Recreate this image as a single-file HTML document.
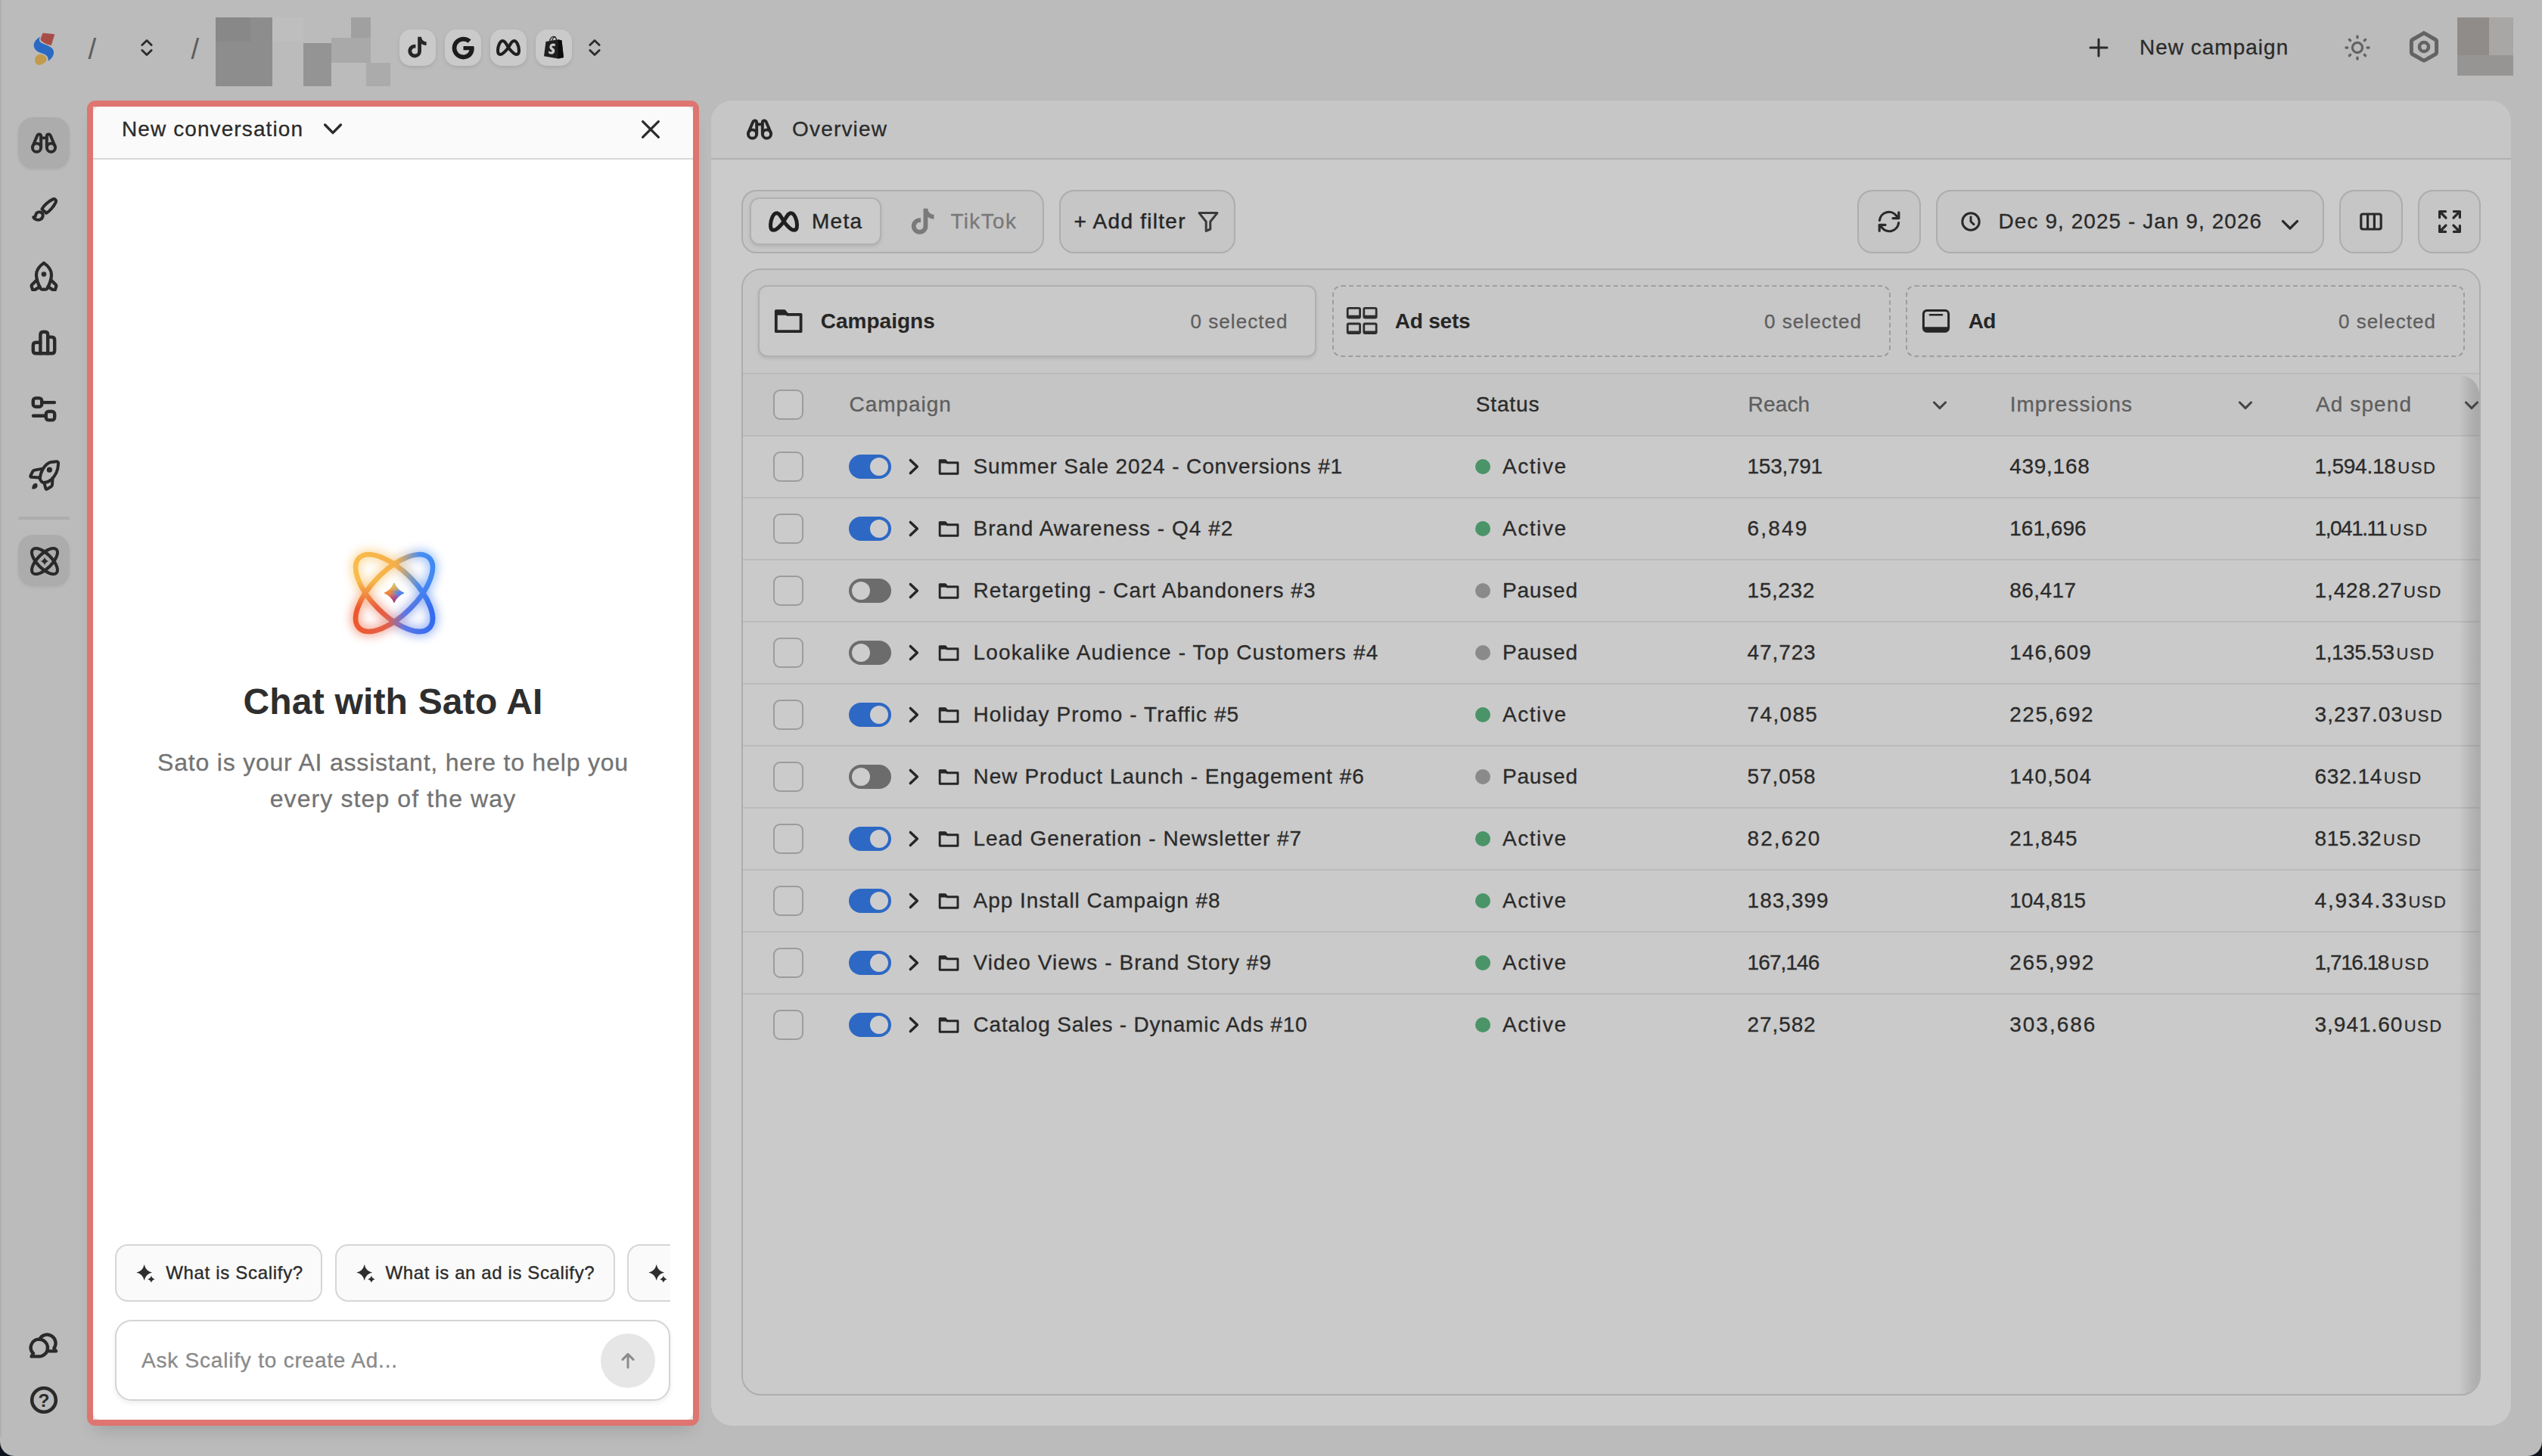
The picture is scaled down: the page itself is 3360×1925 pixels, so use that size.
<!DOCTYPE html>
<html lang="en"><head><meta charset="utf-8"><title>Scalify - Overview</title><style>
*{box-sizing:border-box;margin:0;padding:0}
html,body{width:3360px;height:1925px;overflow:hidden}
body{background:#bbbbbb;font-family:"Liberation Sans",sans-serif;position:relative;color:#2b2b2b}
.a{position:absolute;display:block}
.t{position:absolute;white-space:nowrap;letter-spacing:1px;-webkit-text-stroke:.3px currentColor}
</style></head><body>
<svg class="a" style="left:0px;top:0px;" width="120" height="120" viewBox="0 0 120 120" fill="none">
<path d="M56.9 44 L71.8 45.6 L67.5 59.6 C62 58.5 56 56 54 52.6 C54 50 55.5 47 56.9 44 Z" fill="#a84c48" stroke="#a84c48" stroke-width="0.8" stroke-linejoin="round"/>
<path d="M53.1 48.5 C47 52 43.5 57.5 45 62 C46.5 67.5 52 69.5 57.5 71.2 C62 72.6 64.5 76 63.7 80.7 C68 78 71.5 73.5 71 68.5 C70.5 63.5 66 61.2 60 59 C55.5 57.3 51.5 55.5 52 52 C52.2 50.5 52.6 49.5 53.1 48.5 Z" fill="#2b6ac3"/>
<path d="M46.2 79.5 C46 74.5 50 71.6 53.5 71.8 C58 72 61.8 75 61.6 78.5 C61.4 82 57.5 84.5 53.5 85.8 C49.5 86.6 46.4 84 46.2 79.5 Z" fill="#c39a4c"/>
</svg>
<div class="t" style="left:116.6px;top:42.6px;line-height:44px;font-size:38.4px;color:#5e5e5e;letter-spacing:0;-webkit-text-stroke:0;transform:scaleX(1.0)">/</div>
<div class="t" style="left:252.4px;top:42.6px;line-height:44px;font-size:38.4px;color:#5e5e5e;letter-spacing:0;-webkit-text-stroke:0;transform:scaleX(1.0)">/</div>
<svg class="a" style="left:184px;top:49.3px;" width="20" height="28" viewBox="0 0 20 28" fill="none"><path d="M3.8 10.6 L10 4.6 L16.2 10.6 M3.8 17.4 L10 23.4 L16.2 17.4" stroke="#2b2b2b" stroke-width="2.8" stroke-linecap="round" stroke-linejoin="round"/></svg>
<svg class="a" style="left:775.7px;top:49.3px;" width="20" height="28" viewBox="0 0 20 28" fill="none"><path d="M3.8 10.6 L10 4.6 L16.2 10.6 M3.8 17.4 L10 23.4 L16.2 17.4" stroke="#2b2b2b" stroke-width="2.8" stroke-linecap="round" stroke-linejoin="round"/></svg>
<div class="a" style="left:285px;top:23px;width:75px;height:91px;background:#8d8d8d"></div>
<div class="a" style="left:285px;top:23px;width:46px;height:32px;background:#888888"></div>
<div class="a" style="left:360px;top:23px;width:41px;height:32px;background:#bebebe"></div>
<div class="a" style="left:401px;top:57px;width:37px;height:57px;background:#949494"></div>
<div class="a" style="left:438px;top:50px;width:52px;height:33px;background:#a9a9a9"></div>
<div class="a" style="left:464px;top:23px;width:26px;height:27px;background:#a0a0a0"></div>
<div class="a" style="left:484px;top:83px;width:32px;height:31px;background:#ababab"></div>
<div class="a" style="left:528px;top:39px;width:48px;height:48px;border-radius:15px;background:#cacaca;box-shadow:0 2px 5px rgba(0,0,0,.10)"></div>
<div class="a" style="left:588px;top:39px;width:48px;height:48px;border-radius:15px;background:#cacaca;box-shadow:0 2px 5px rgba(0,0,0,.10)"></div>
<div class="a" style="left:648px;top:39px;width:48px;height:48px;border-radius:15px;background:#cacaca;box-shadow:0 2px 5px rgba(0,0,0,.10)"></div>
<div class="a" style="left:708px;top:39px;width:48px;height:48px;border-radius:15px;background:#cacaca;box-shadow:0 2px 5px rgba(0,0,0,.10)"></div>
<svg class="a" style="left:533px;top:43.7px;" width="37" height="37" viewBox="0 0 24 24" fill="none"><path d="M16.6 5.82s.51.5 0 0A4.278 4.278 0 0 1 15.54 3h-3.09v12.4a2.592 2.592 0 0 1-2.59 2.5c-1.42 0-2.6-1.16-2.6-2.6 0-1.72 1.66-3.01 3.37-2.48V9.66c-3.45-.46-6.47 2.22-6.47 5.64 0 3.33 2.76 5.7 5.69 5.7 3.14 0 5.69-2.55 5.69-5.7V9.01a7.35 7.35 0 0 0 4.3 1.38V7.3s-1.88.09-3.24-1.48z" fill="#262626"/></svg>
<svg class="a" style="left:594.5px;top:45.7px;" width="35" height="35" viewBox="0 0 24 24" fill="none"><path d="M21.35 10.2 H12 V13.9 H17.4 C16.7 16.6 14.6 18.2 12 18.2 C8.6 18.2 5.8 15.4 5.8 12 C5.8 8.6 8.6 5.8 12 5.8 C13.6 5.8 15 6.4 16.1 7.3 L18.9 4.5 C17.1 2.8 14.7 1.8 12 1.8 C6.4 1.8 1.8 6.4 1.8 12 C1.8 17.6 6.4 22.2 12 22.2 C17.6 22.2 21.8 18.3 21.8 12 C21.8 11.4 21.5 10.8 21.35 10.2 Z" fill="#1c1c1c"/></svg>
<svg class="a" style="left:652px;top:43px;" width="40" height="40" viewBox="-20 -20 40 40" fill="none"><path d="M0 0 C-2.5 -4.5 -4.5 -9 -7.5 -9 C-11.5 -9 -14 -1 -14 3.5 C-14 7 -12.8 9 -10.8 9 C-7.5 9 -4 5 0 0 C2.5 -4.5 4.5 -9 7.5 -9 C11.5 -9 14 -1 14 3.5 C14 7 12.8 9 10.8 9 C7.5 9 4 5 0 0 Z" stroke="#1f1f1f" stroke-width="4.1" stroke-linejoin="round"/></svg>
<svg class="a" style="left:717px;top:46px;" width="30" height="34" viewBox="0 0 30 34" fill="none">
<path d="M4.5 9 L20.5 6.2 L25.5 7.4 L28 30 L20.8 31.6 L2 28.2 Z" fill="#1f1f1f"/>
<path d="M20.8 6.3 L25.5 7.4 L28 30 L20.8 31.6 Z" fill="#0c0c0c"/>
<path d="M9.5 8.5 C10 4.5 13 1.5 15.5 2.5 C17.5 3.3 18.5 6 18.5 7.5 M12.5 8 C13.5 4 16 2 17.5 3" stroke="#1f1f1f" stroke-width="1.3" fill="none"/>
<path d="M17.2 12.4 L16.2 15.4 C15.2 14.9 14.2 14.8 13.6 14.9 C12.2 15.1 12.2 16.2 13 16.8 C14.4 17.9 16.6 18.8 16.3 21.8 C16 24.6 13.6 26.2 10.8 25.6 C9.4 25.3 8.4 24.6 7.8 23.8 L8.6 21.2 C9.4 21.9 10.6 22.7 11.6 22.6 C12.6 22.5 12.9 21.6 12.3 20.8 C11.1 19.4 9 18.5 9.4 15.6 C9.8 12.6 12.6 11.2 15.4 11.7 C16.2 11.85 16.8 12.1 17.2 12.4 Z" fill="#cacaca"/>
</svg>
<svg class="a" style="left:2760px;top:48.5px;" width="28" height="28" viewBox="0 0 28 28" fill="none"><path d="M14 3 V25 M3 14 H25" stroke="#2b2b2b" stroke-width="3" stroke-linecap="round"/></svg>
<div class="t" style="left:2828px;top:43.32px;line-height:40px;font-size:28px;color:#2b2b2b;font-weight:400;letter-spacing:1.0px;">New campaign</div>
<svg class="a" style="left:3096px;top:43px;" width="40" height="40" viewBox="0 0 40 40" fill="none"><circle cx="20" cy="20" r="6.6" stroke="#636363" stroke-width="3.2"/><path d="M33.20 20.00 L35.00 20.00" stroke="#636363" stroke-width="3.4" stroke-linecap="round"/><path d="M29.33 29.33 L30.61 30.61" stroke="#636363" stroke-width="3.4" stroke-linecap="round"/><path d="M20.00 33.20 L20.00 35.00" stroke="#636363" stroke-width="3.4" stroke-linecap="round"/><path d="M10.67 29.33 L9.39 30.61" stroke="#636363" stroke-width="3.4" stroke-linecap="round"/><path d="M6.80 20.00 L5.00 20.00" stroke="#636363" stroke-width="3.4" stroke-linecap="round"/><path d="M10.67 10.67 L9.39 9.39" stroke="#636363" stroke-width="3.4" stroke-linecap="round"/><path d="M20.00 6.80 L20.00 5.00" stroke="#636363" stroke-width="3.4" stroke-linecap="round"/><path d="M29.33 10.67 L30.61 9.39" stroke="#636363" stroke-width="3.4" stroke-linecap="round"/></svg>
<svg class="a" style="left:3180px;top:38px;" width="48" height="48" viewBox="0 0 48 48" fill="none"><path d="M24 5.6 L39.4 14.5 Q40.6 15.2 40.6 16.6 V31.4 Q40.6 32.8 39.4 33.5 L25.2 41.7 Q24 42.4 22.8 41.7 L8.6 33.5 Q7.4 32.8 7.4 31.4 V16.6 Q7.4 15.2 8.6 14.5 L22.8 6.3 Q24 5.6 25.2 6.3" stroke="#636363" stroke-width="5" stroke-linejoin="round" stroke-linecap="round"/><circle cx="24" cy="24" r="6" stroke="#636363" stroke-width="4.6"/></svg>
<div class="a" style="left:3248px;top:23px;width:74px;height:77px;background:#979593"></div>
<div class="a" style="left:3248px;top:23px;width:42px;height:50px;background:#908c89"></div>
<div class="a" style="left:3290px;top:23px;width:32px;height:50px;background:#a9a7a5"></div>
<div class="a" style="left:24px;top:155px;width:68px;height:68px;border-radius:20px;background:#acacac;box-shadow:0 2px 4px rgba(0,0,0,.06)"></div>
<div class="a" style="left:24px;top:707px;width:68px;height:68px;border-radius:20px;background:#acacac;box-shadow:0 2px 4px rgba(0,0,0,.06)"></div>
<svg class="a" style="left:38px;top:169px;" width="40.0" height="40.0" viewBox="0 0 40 40" fill="none"><g stroke="#2a2a2a" stroke-width="3.9" stroke-linecap="round" stroke-linejoin="round">
<circle cx="10.5" cy="26.2" r="5.6"/><circle cx="29.5" cy="26.2" r="5.6"/>
<path d="M5.2 24.6 L10.9 11 Q12.2 8 14.6 8.6 Q16.2 9.1 16.2 11 V26.3"/>
<path d="M34.8 24.6 L29.1 11 Q27.8 8 25.4 8.6 Q23.8 9.1 23.8 11 V26.3"/>
<path d="M16.2 13.4 H23.8"/></g></svg>
<svg class="a" style="left:38px;top:257px;" width="40" height="40" viewBox="0 0 40 40" fill="none"><g stroke="#2a2a2a" stroke-width="4" stroke-linecap="round" stroke-linejoin="round">
<path d="M17.4 19.4 C20 14.6 26.6 9 31.4 6.6 C34.6 5.2 37 7.4 35.6 10.6 C33.4 15.4 28 22 23.2 24.8 Z"/>
<path d="M13 23.4 C16.5 22.8 19.3 25.6 18.6 29 C17.9 32.6 14 34.6 10.2 33.4 C8.2 32.8 6.8 31.6 6.2 30 C8.4 30 9 28.6 9.2 27.2 C9.5 25.2 11 23.8 13 23.4 Z"/>
</g></svg>
<svg class="a" style="left:38px;top:345px;" width="40" height="40" viewBox="0 0 40 40" fill="none"><g stroke="#2a2a2a" stroke-width="4.2" stroke-linecap="round" stroke-linejoin="round">
<path d="M20 2.6 C26.5 7.2 30 12.4 30 18.4 C30 24.4 27.4 30.6 24.6 36.4 Q23.8 37.6 22.4 37.6 H17.6 Q16.2 37.6 15.4 36.4 C12.6 30.6 10 24.4 10 18.4 C10 12.4 13.5 7.2 20 2.6 Z"/>
<path d="M10.6 25.2 L4.2 31.6 Q3.4 32.6 3.8 33.8 L5.2 38.2 Q5.8 39.6 7.2 38.8 L14.6 34"/>
<path d="M29.4 25.2 L35.8 31.6 Q36.6 32.6 36.2 33.8 L34.8 38.2 Q34.2 39.6 32.8 38.8 L25.4 34"/>
</g><circle cx="20" cy="17.6" r="3.3" fill="#2a2a2a"/></svg>
<svg class="a" style="left:38px;top:433px;" width="40" height="40" viewBox="0 0 40 40" fill="none"><g stroke="#2a2a2a" stroke-width="4.4" stroke-linecap="round" stroke-linejoin="round">
<path d="M15.4 19.8 H9.6 Q5.8 19.8 5.8 23.6 V30.4 Q5.8 34.2 9.6 34.2 H30.4 Q34.2 34.2 34.2 30.4 V16.4 Q34.2 12.6 30.4 12.6 H25.2"/>
<path d="M15.4 34.2 V9.6 Q15.4 5.8 19.2 5.8 H21.4 Q25.2 5.8 25.2 9.6 V34.2"/>
</g></svg>
<svg class="a" style="left:38px;top:521px;" width="40" height="40" viewBox="0 0 40 40" fill="none"><g stroke="#2a2a2a" stroke-width="4.4" stroke-linecap="round" stroke-linejoin="round">
<rect x="5.8" y="5.4" width="11.4" height="11.4" rx="3.4"/><path d="M18 11.1 H34"/>
<rect x="22.8" y="23" width="11.4" height="11.4" rx="3.4"/><path d="M6 28.7 H22"/>
</g></svg>
<svg class="a" style="left:36px;top:607px;" width="44" height="44" viewBox="0 0 44 44" fill="none"><g stroke="#2a2a2a" stroke-width="4" stroke-linecap="round" stroke-linejoin="round">
<path d="M16.8 26.2 C17.4 16.5 23 6.4 31.5 3.9 L38.4 3.2 Q41.4 3 41.1 6 C40.8 14.5 37.5 22 31.5 27.4 C28.4 30 25 31.2 21.6 31 Q18.4 30.8 16.8 26.2 Z"/>
<path d="M20.4 12.6 L9.4 14.6 Q8 15 7.4 16.2 L4.4 22 Q3.8 23.6 5.4 23.8 L16.4 24.6"/>
<path d="M33.6 25 L33 34 Q33 35.4 31.8 36.2 L26.2 39.6 Q24.8 40.4 24.4 38.8 L22.4 31.4"/>
</g><circle cx="29.4" cy="14.2" r="3.6" fill="#2a2a2a"/>
<path d="M11.6 32 C8.4 31.8 6.2 34.4 6.2 39.6 C10.6 39.8 13.8 38 13.6 34.4 C13.5 33 12.8 32.2 11.6 32 Z" fill="#2a2a2a"/></svg>
<div class="a" style="left:24px;top:683px;width:68px;height:4px;background:#adadad;border-radius:1px"></div>
<svg class="a" style="left:36px;top:719px;" width="46" height="46" viewBox="0 0 46 46" fill="none"><g stroke="#2a2a2a" stroke-width="4" fill="none">
<ellipse cx="23" cy="23" rx="22" ry="9.6" transform="rotate(45 23 23)"/>
<ellipse cx="23" cy="23" rx="22" ry="9.6" transform="rotate(-45 23 23)"/></g>
<path d="M23 17.8 Q24.2 21.8 28.2 23 Q24.2 24.2 23 28.2 Q21.8 24.2 17.8 23 Q21.8 21.8 23 17.8 Z" fill="#2a2a2a"/></svg>
<svg class="a" style="left:36px;top:1757px;" width="44" height="44" viewBox="0 0 44 44" fill="none"><g stroke="#2a2a2a" stroke-width="4.4" stroke-linecap="round" stroke-linejoin="round">
<path d="M17.2 12.2 A11 11 0 1 1 35.4 25.4 L38 29.4 H28.6"/>
<path d="M15.6 13.6 A11 11 0 0 1 15.6 36.4 H5.6 L8 32.4 A11 11 0 0 1 15.6 13.6 Z"/>
</g></svg>
<svg class="a" style="left:36px;top:1829px;" width="44" height="44" viewBox="0 0 44 44" fill="none"><circle cx="22" cy="22" r="15.8" stroke="#2a2a2a" stroke-width="4.6"/>
<text x="22.1" y="30.6" text-anchor="middle" font-family="Liberation Sans, sans-serif" font-weight="700" font-size="24.5" fill="#2a2a2a">?</text></svg>
<div class="a" style="left:0;top:1906px;width:19px;height:19px;background:radial-gradient(circle at 100% 0%, rgba(13,20,32,0) 0 18.4px, #0d1420 19.4px)"></div>
<div class="a" style="left:3341px;top:1906px;width:19px;height:19px;background:radial-gradient(circle at 0% 0%, rgba(13,20,32,0) 0 18.4px, #0d1420 19.4px)"></div>
<div class="a" style="left:0;top:0;width:2px;height:1900px;background:#b0b0b0"></div>
<div class="a" style="left:115px;top:133px;width:809px;height:1752px;border-radius:11px;background:#df7570;box-shadow:0 14px 22px -10px rgba(0,0,0,.16)"></div>
<div class="a" style="left:123px;top:141px;width:793px;height:1736px;background:#e4e4e4"></div>
<div class="a" style="left:123px;top:141px;width:793px;height:1736px;background:#ffffff;border-radius:9px;overflow:hidden"><div style="height:70px;background:#fafafa;border-bottom:2px solid #d9d9d9"></div></div>
<div class="t" style="left:161px;top:151.32px;line-height:40px;font-size:28px;color:#2b2b2b;font-weight:400;letter-spacing:1.096px;">New conversation</div>
<svg class="a" style="left:424px;top:156px;" width="32" height="28" viewBox="0 0 32 28" fill="none"><path d="M5.6 9 L16 19.6 L26.4 9" stroke="#2b2b2b" stroke-width="3.4" stroke-linecap="round" stroke-linejoin="round"/></svg>
<svg class="a" style="left:844px;top:155px;" width="32" height="32" viewBox="0 0 32 32" fill="none"><path d="M5.6 5.6 L26.4 26.4 M26.4 5.6 L5.6 26.4" stroke="#2b2b2b" stroke-width="3.2" stroke-linecap="round"/></svg>
<svg class="a" style="left:430.5px;top:694px;" width="180" height="180" viewBox="0 0 180 180" fill="none"><defs>
<linearGradient id="gA" gradientUnits="userSpaceOnUse" x1="30" y1="0" x2="150" y2="0"><stop offset="0" stop-color="#f9bd4c"/><stop offset=".52" stop-color="#f5b048"/><stop offset=".78" stop-color="#4a8ef2"/><stop offset="1" stop-color="#3b86f5"/></linearGradient>
<linearGradient id="gB" gradientUnits="userSpaceOnUse" x1="30" y1="0" x2="150" y2="0"><stop offset="0" stop-color="#f0562a"/><stop offset=".42" stop-color="#e4604a"/><stop offset=".62" stop-color="#5a78e8"/><stop offset="1" stop-color="#2a68f0"/></linearGradient>
<linearGradient id="gM" gradientUnits="userSpaceOnUse" x1="0" y1="40" x2="0" y2="140"><stop offset="0" stop-color="#000"/><stop offset=".35" stop-color="#000"/><stop offset=".7" stop-color="#fff"/><stop offset="1" stop-color="#fff"/></linearGradient>
<mask id="mk" maskUnits="userSpaceOnUse" x="0" y="0" width="180" height="180"><rect width="180" height="180" fill="url(#gM)"/></mask>
<linearGradient id="g3" x1="0" y1="0" x2="1" y2="0"><stop offset="0" stop-color="#f4822c"/><stop offset=".3" stop-color="#ee8c3a"/><stop offset=".7" stop-color="#4a8af0"/><stop offset="1" stop-color="#3a86f2"/></linearGradient><linearGradient id="g4" x1="0" y1="0" x2="0" y2="1"><stop offset="0" stop-color="#f8d040"/><stop offset=".32" stop-color="#f4c040" stop-opacity=".55"/><stop offset=".5" stop-color="#c86090" stop-opacity="0"/><stop offset=".68" stop-color="#c03088" stop-opacity=".55"/><stop offset="1" stop-color="#c02878"/></linearGradient>
<filter id="bl" x="-30%" y="-30%" width="160%" height="160%"><feGaussianBlur stdDeviation="6.5"/></filter>
<g id="orb" fill="none"><path d="M136.32 136.32 A65.5 29.6 45 1 0 43.68 43.68 A65.5 29.6 45 1 0 136.32 136.32 Z"/><path d="M43.68 136.32 A65.5 29.6 135 1 0 136.32 43.68 A65.5 29.6 135 1 0 43.68 136.32 Z"/></g>
</defs>
<g filter="url(#bl)" opacity=".6"><use href="#orb" stroke="url(#gA)" stroke-width="11"/><use href="#orb" stroke="url(#gB)" stroke-width="11" mask="url(#mk)"/></g>
<use href="#orb" stroke="url(#gA)" stroke-width="6.6"/><use href="#orb" stroke="url(#gB)" stroke-width="6.6" mask="url(#mk)"/>
<path d="M90 77 Q93.9 86.1 103 90 Q93.9 93.9 90 103 Q86.1 93.9 77 90 Q86.1 86.1 90 77 Z" fill="url(#g3)" stroke="url(#g3)" stroke-width="0.8" stroke-linejoin="round"/><path d="M90 77 Q93.9 86.1 103 90 Q93.9 93.9 90 103 Q86.1 93.9 77 90 Q86.1 86.1 90 77 Z" fill="url(#g4)"/></svg>
<div class="t" style="left:123px;width:793px;text-align:center;top:896px;line-height:64px;font-size:48px;font-weight:700;color:#2e2e2e;-webkit-text-stroke:0;letter-spacing:0.194px">Chat with Sato AI</div>
<div class="t" style="left:123px;width:793px;text-align:center;top:983.5px;line-height:48px;font-size:32px;color:#737373;white-space:normal;padding:0 60px"><span style="letter-spacing:0.791px;white-space:nowrap">Sato is your AI assistant, here to help you</span><br><span style="letter-spacing:1.106px;white-space:nowrap">every step of the way</span></div>
<div class="a" style="left:152px;top:1645px;width:734px;height:76px;overflow:hidden">
<div class="a" style="left:0px;top:0;width:274px;height:76px;border:2px solid #d6d6d6;border-radius:17px;background:#fafafa"></div>
<svg class="a" style="left:27px;top:25px" width="27" height="27" viewBox="0 0 24 24"><path d="M10.4 1.6 Q12 9.4 19.6 11 Q12 12.6 10.4 20.4 Q8.8 12.6 1.2 11 Q8.8 9.4 10.4 1.6 Z" fill="#2e2e2e"/><path d="M18.6 14.6 Q19.4 18 22.8 18.8 Q19.4 19.6 18.6 23 Q17.8 19.6 14.4 18.8 Q17.8 18 18.6 14.6 Z" fill="#2e2e2e"/></svg>
<div class="t" style="left:67.2px;top:18.3px;line-height:40px;font-size:24px;color:#2b2b2b;letter-spacing:0.685px;-webkit-text-stroke:.35px #2b2b2b">What is Scalify?</div>
<div class="a" style="left:291px;top:0;width:370px;height:76px;border:2px solid #d6d6d6;border-radius:17px;background:#fafafa"></div>
<svg class="a" style="left:318px;top:25px" width="27" height="27" viewBox="0 0 24 24"><path d="M10.4 1.6 Q12 9.4 19.6 11 Q12 12.6 10.4 20.4 Q8.8 12.6 1.2 11 Q8.8 9.4 10.4 1.6 Z" fill="#2e2e2e"/><path d="M18.6 14.6 Q19.4 18 22.8 18.8 Q19.4 19.6 18.6 23 Q17.8 19.6 14.4 18.8 Q17.8 18 18.6 14.6 Z" fill="#2e2e2e"/></svg>
<div class="t" style="left:357.6px;top:18.3px;line-height:40px;font-size:24px;color:#2b2b2b;letter-spacing:0.606px;-webkit-text-stroke:.35px #2b2b2b">What is an ad is Scalify?</div>
<div class="a" style="left:677px;top:0;width:300px;height:76px;border:2px solid #d6d6d6;border-radius:17px;background:#fafafa"></div>
<svg class="a" style="left:704px;top:25px" width="27" height="27" viewBox="0 0 24 24"><path d="M10.4 1.6 Q12 9.4 19.6 11 Q12 12.6 10.4 20.4 Q8.8 12.6 1.2 11 Q8.8 9.4 10.4 1.6 Z" fill="#2e2e2e"/><path d="M18.6 14.6 Q19.4 18 22.8 18.8 Q19.4 19.6 18.6 23 Q17.8 19.6 14.4 18.8 Q17.8 18 18.6 14.6 Z" fill="#2e2e2e"/></svg>
</div>
<div class="a" style="left:152px;top:1745px;width:734px;height:107px;border:2px solid #d4d4d4;border-radius:22px;background:#fff;box-shadow:0 3px 6px rgba(0,0,0,.07)"></div>
<div class="t" style="left:187px;top:1779.32px;line-height:40px;font-size:28px;color:#8a8a8a;font-weight:400;letter-spacing:0.789px;">Ask Scalify to create Ad...</div>
<div class="a" style="left:794px;top:1763px;width:72px;height:72px;border-radius:50%;background:#e6e6e6"></div>
<svg class="a" style="left:816px;top:1785px;" width="28" height="28" viewBox="0 0 28 28" fill="none"><path d="M14 23 V6 M7 12.4 L14 5.4 L21 12.4" stroke="#8c8c8c" stroke-width="3" stroke-linecap="round" stroke-linejoin="round"/></svg>
<div class="a" style="left:940px;top:133px;width:2379px;height:1752px;border-radius:28px;background:#cbcbcb;overflow:hidden"><div style="height:78px;background:#c6c6c6;border-bottom:2px solid #b1b1b1"></div></div>
<svg class="a" style="left:984px;top:151px;" width="40.0" height="40.0" viewBox="0 0 40 40" fill="none"><g stroke="#262626" stroke-width="3.9" stroke-linecap="round" stroke-linejoin="round">
<circle cx="10.5" cy="26.2" r="5.6"/><circle cx="29.5" cy="26.2" r="5.6"/>
<path d="M5.2 24.6 L10.9 11 Q12.2 8 14.6 8.6 Q16.2 9.1 16.2 11 V26.3"/>
<path d="M34.8 24.6 L29.1 11 Q27.8 8 25.4 8.6 Q23.8 9.1 23.8 11 V26.3"/>
<path d="M16.2 13.4 H23.8"/></g></svg>
<div class="t" style="left:1047px;top:151.32px;line-height:40px;font-size:28px;color:#2b2b2b;font-weight:400;letter-spacing:1.185px;">Overview</div>
<div class="a" style="left:980px;top:251px;width:400px;height:84px;border:2px solid #adadad;border-radius:20px;background:#c6c6c6;"></div>
<div class="a" style="left:991px;top:261px;width:174px;height:63px;border:2px solid #b1b1b1;border-radius:13px;background:#cbcbcb;box-shadow:0 2px 4px rgba(0,0,0,.10)"></div>
<svg class="a" style="left:1011px;top:268px;" width="50" height="50" viewBox="-20 -20 40 40" fill="none"><path d="M0 0 C-2.5 -4.5 -4.5 -9 -7.5 -9 C-11.5 -9 -14 -1 -14 3.5 C-14 7 -12.8 9 -10.8 9 C-7.5 9 -4 5 0 0 C2.5 -4.5 4.5 -9 7.5 -9 C11.5 -9 14 -1 14 3.5 C14 7 12.8 9 10.8 9 C7.5 9 4 5 0 0 Z" stroke="#1f1f1f" stroke-width="4" stroke-linejoin="round"/></svg>
<div class="t" style="left:1073px;top:273.32px;line-height:40px;font-size:28px;color:#262626;font-weight:400;letter-spacing:1.250px;-webkit-text-stroke:0.4px #262626;">Meta</div>
<svg class="a" style="left:1197.3px;top:269.5px;" width="45.4" height="45.4" viewBox="0 0 24 24" fill="none"><path d="M16.6 5.82s.51.5 0 0A4.278 4.278 0 0 1 15.54 3h-3.09v12.4a2.592 2.592 0 0 1-2.59 2.5c-1.42 0-2.6-1.16-2.6-2.6 0-1.72 1.66-3.01 3.37-2.48V9.66c-3.45-.46-6.47 2.22-6.47 5.64 0 3.33 2.76 5.7 5.69 5.7 3.14 0 5.69-2.55 5.69-5.7V9.01a7.35 7.35 0 0 0 4.3 1.38V7.3s-1.88.09-3.24-1.48z" fill="#7a7a7a"/></svg>
<div class="t" style="left:1256.4px;top:273.32px;line-height:40px;font-size:28px;color:#787878;font-weight:400;letter-spacing:1.348px;-webkit-text-stroke:0.3px #787878;">TikTok</div>
<div class="a" style="left:1400px;top:251px;width:233px;height:84px;border:2px solid #adadad;border-radius:20px;background:#c6c6c6;"></div>
<div class="t" style="left:1419.5px;top:273.32px;line-height:40px;font-size:28px;color:#262626;font-weight:400;letter-spacing:1.264px;-webkit-text-stroke:0.45px #262626;">+ Add filter</div>
<svg class="a" style="left:1580px;top:276px;" width="34" height="34" viewBox="0 0 34 34" fill="none"><path d="M5 5.6 H29 L19.8 17 V27 L14.2 29.4 V17 Z" stroke="#3a3a3a" stroke-width="3" stroke-linejoin="round" stroke-linecap="round"/></svg>
<div class="a" style="left:2455px;top:251px;width:84px;height:84px;border:2px solid #adadad;border-radius:20px;background:#c6c6c6;"></div>
<svg class="a" style="left:2479px;top:275px;" width="36" height="36" viewBox="0 0 36 36" fill="none"><g stroke="#2a2a2a" stroke-width="3.2" stroke-linecap="round" stroke-linejoin="round">
<path d="M5.4 16.4 A12.4 12.4 0 0 1 27.6 10.2 L30.6 13.4"/><path d="M30.8 5.8 V13.6 H23"/>
<path d="M30.6 19.6 A12.4 12.4 0 0 1 8.4 25.8 L5.4 22.6"/><path d="M5.2 30.2 V22.4 H13"/></g></svg>
<div class="a" style="left:2559px;top:251px;width:513px;height:84px;border:2px solid #adadad;border-radius:20px;background:#c6c6c6;"></div>
<svg class="a" style="left:2588.6px;top:276.8px;" width="32" height="32" viewBox="0 0 32 32" fill="none"><circle cx="16" cy="16" r="11.2" stroke="#2a2a2a" stroke-width="3"/><path d="M16 9.8 V16 L20 19.6" stroke="#2a2a2a" stroke-width="3" stroke-linecap="round" stroke-linejoin="round"/></svg>
<div class="t" style="left:2641.6px;top:273.32px;line-height:40px;font-size:28px;color:#2b2b2b;font-weight:400;letter-spacing:1.053px;">Dec 9, 2025 - Jan 9, 2026</div>
<svg class="a" style="left:3011px;top:285px;" width="32" height="24" viewBox="0 0 32 24" fill="none"><path d="M6.4 7.4 L16 17 L25.6 7.4" stroke="#2a2a2a" stroke-width="3.2" stroke-linecap="round" stroke-linejoin="round"/></svg>
<div class="a" style="left:3092px;top:251px;width:84px;height:84px;border:2px solid #adadad;border-radius:20px;background:#c6c6c6;"></div>
<svg class="a" style="left:3116px;top:276.6px;" width="36" height="32" viewBox="0 0 36 32" fill="none"><rect x="4.8" y="6" width="26.4" height="20" rx="2.4" stroke="#2a2a2a" stroke-width="3.2"/><path d="M13.6 6 V26 M22.4 6 V26" stroke="#2a2a2a" stroke-width="3.2"/></svg>
<div class="a" style="left:3196px;top:251px;width:83px;height:84px;border:2px solid #adadad;border-radius:20px;background:#c6c6c6;"></div>
<svg class="a" style="left:3220px;top:275px;" width="36" height="36" viewBox="0 0 36 36" fill="none"><g stroke="#2a2a2a" stroke-width="3.2" stroke-linecap="round" stroke-linejoin="round">
<path d="M4.6 12.6 V4.6 H12.6 M4.6 4.6 L13 13"/><path d="M23.4 4.6 H31.4 V12.6 M31.4 4.6 L23 13"/>
<path d="M4.6 23.4 V31.4 H12.6 M4.6 31.4 L13 23"/><path d="M23.4 31.4 H31.4 V23.4 M31.4 31.4 L23 23"/></g></svg>
<div class="a" style="left:980px;top:355px;width:2299px;height:1490px;border:2px solid #adadad;border-radius:26px;background:#c8c8c8;overflow:hidden">
<div class="a" style="left:0;top:0;width:2295px;height:138px;background:#c7c7c7;border-bottom:2px solid #bababa"></div>
<div class="a" style="left:0;top:138px;width:2295px;height:82px;background:#c5c5c5;border-bottom:2px solid #b9b9b9"></div>
<div class="a" style="left:0;top:220px;width:2295px;height:82px;background:#cacaca;border-bottom:2px solid #bbbbbb;"></div>
<div class="a" style="left:0;top:302px;width:2295px;height:82px;background:#cacaca;border-bottom:2px solid #bbbbbb;"></div>
<div class="a" style="left:0;top:384px;width:2295px;height:82px;background:#cacaca;border-bottom:2px solid #bbbbbb;"></div>
<div class="a" style="left:0;top:466px;width:2295px;height:82px;background:#cacaca;border-bottom:2px solid #bbbbbb;"></div>
<div class="a" style="left:0;top:548px;width:2295px;height:82px;background:#cacaca;border-bottom:2px solid #bbbbbb;"></div>
<div class="a" style="left:0;top:630px;width:2295px;height:82px;background:#cacaca;border-bottom:2px solid #bbbbbb;"></div>
<div class="a" style="left:0;top:712px;width:2295px;height:82px;background:#cacaca;border-bottom:2px solid #bbbbbb;"></div>
<div class="a" style="left:0;top:794px;width:2295px;height:82px;background:#cacaca;border-bottom:2px solid #bbbbbb;"></div>
<div class="a" style="left:0;top:876px;width:2295px;height:82px;background:#cacaca;border-bottom:2px solid #bbbbbb;"></div>
<div class="a" style="left:0;top:958px;width:2295px;height:82px;background:#cacaca;"></div>
<div class="a" style="left:0;top:1040px;width:2295px;height:460px;background:#cacaca"></div>
<div class="a" style="left:2268px;top:139px;width:27px;height:1360px;border-top-right-radius:26px;background:linear-gradient(90deg,rgba(0,0,0,0),rgba(0,0,0,.10) 60%,rgba(0,0,0,.15))"></div>
</div>
<div class="a" style="left:1002px;top:377px;width:738px;height:95px;border:2px solid #b0b0b0;border-radius:12px;background:#c9c9c9;box-shadow:0 2px 4px rgba(0,0,0,.10)"></div>
<svg class="a" style="left:1020px;top:404px;" width="44" height="40" viewBox="0 0 44 40" fill="none"><path d="M5.8 34.2 V7.2 H16.8 L20.6 11.8 H38.6 V34.2 Z" stroke="#262626" stroke-width="3.8" stroke-linejoin="round"/><path d="M5.8 7.2 H16.8 L20.6 11.8 H5.8 Z" fill="#262626" stroke="#262626" stroke-width="2" stroke-linejoin="round"/></svg>
<div class="t" style="left:1084.8px;top:405.32px;line-height:40px;font-size:28px;color:#262626;font-weight:700;letter-spacing:0.008px;-webkit-text-stroke:0;">Campaigns</div>
<div class="t" style="left:1573.5px;top:405.30px;line-height:40px;font-size:26px;color:#5e5e5e;font-weight:400;letter-spacing:1.052px;">0 selected</div>
<div class="a" style="left:1761px;top:377px;width:738px;height:95px;border:2px dashed #9e9e9e;border-radius:12px"></div>
<svg class="a" style="left:1777px;top:402px;" width="48" height="46" viewBox="0 0 48 46" fill="none"><g stroke="#2e2e2e" stroke-width="2.8"><rect x="4.2" y="5.4" width="16.4" height="12.6" rx="1.6"/><rect x="25.8" y="5.4" width="16.4" height="12.6" rx="1.6"/>
<rect x="4.2" y="26" width="16.4" height="12.6" rx="1.6"/><rect x="25.8" y="26" width="16.4" height="12.6" rx="1.6"/></g>
<path d="M4.2 16.6 H20.6 M25.8 16.6 H42.2 M4.2 37.2 H20.6 M25.8 37.2 H42.2" stroke="#2e2e2e" stroke-width="3.6"/></svg>
<div class="t" style="left:1843.7px;top:405.32px;line-height:40px;font-size:28px;color:#262626;font-weight:700;letter-spacing:-0.193px;-webkit-text-stroke:0;">Ad sets</div>
<div class="t" style="left:2332px;top:405.30px;line-height:40px;font-size:26px;color:#5e5e5e;font-weight:400;letter-spacing:1.052px;">0 selected</div>
<div class="a" style="left:2519px;top:377px;width:739px;height:95px;border:2px dashed #9e9e9e;border-radius:12px"></div>
<svg class="a" style="left:2537px;top:405px;" width="44" height="40" viewBox="0 0 44 40" fill="none"><rect x="5.4" y="5.6" width="33.2" height="27.6" rx="4.4" stroke="#262626" stroke-width="3"/><path d="M5.4 27.2 H38.6 V30 Q38.6 33.2 35.4 33.2 H8.6 Q5.4 33.2 5.4 30 Z" fill="#262626"/><path d="M14 11.2 H30" stroke="#262626" stroke-width="2.6" stroke-linecap="round"/></svg>
<div class="t" style="left:2601.8px;top:405.32px;line-height:40px;font-size:28px;color:#262626;font-weight:700;letter-spacing:-0.728px;-webkit-text-stroke:0;">Ad</div>
<div class="t" style="left:3091px;top:405.30px;line-height:40px;font-size:26px;color:#5e5e5e;font-weight:400;letter-spacing:1.052px;">0 selected</div>
<div class="a" style="left:1022px;top:515px;width:40px;height:40px;border:2px solid #9c9c9c;border-radius:9px;background:#cbcbcb"></div>
<div class="t" style="left:1122.5px;top:515.32px;line-height:40px;font-size:28px;color:#5e5e5e;font-weight:400;letter-spacing:0.951px;">Campaign</div>
<div class="t" style="left:1950.8px;top:515.32px;line-height:40px;font-size:28px;color:#2a2a2a;font-weight:400;letter-spacing:0.842px;-webkit-text-stroke:0.35px #2a2a2a;">Status</div>
<div class="t" style="left:2310.6px;top:515.32px;line-height:40px;font-size:28px;color:#5e5e5e;font-weight:400;letter-spacing:0.166px;">Reach</div>
<div class="t" style="left:2656.7px;top:515.32px;line-height:40px;font-size:28px;color:#5e5e5e;font-weight:400;letter-spacing:1.036px;">Impressions</div>
<div class="t" style="left:3061px;top:515.32px;line-height:40px;font-size:28px;color:#5e5e5e;font-weight:400;letter-spacing:1.096px;">Ad spend</div>
<svg class="a" style="left:2552px;top:526.5px;" width="24" height="18" viewBox="0 0 24 18" fill="none"><path d="M4.4 5 L12 12.6 L19.6 5" stroke="#444" stroke-width="3" stroke-linecap="round" stroke-linejoin="round"/></svg>
<svg class="a" style="left:2956px;top:526.5px;" width="24" height="18" viewBox="0 0 24 18" fill="none"><path d="M4.4 5 L12 12.6 L19.6 5" stroke="#444" stroke-width="3" stroke-linecap="round" stroke-linejoin="round"/></svg>
<svg class="a" style="left:3255px;top:526.5px;" width="24" height="18" viewBox="0 0 24 18" fill="none"><path d="M4.4 5 L12 12.6 L19.6 5" stroke="#444" stroke-width="3" stroke-linecap="round" stroke-linejoin="round"/></svg>
<div class="a" style="left:1022px;top:597px;width:40px;height:40px;border:2px solid #9c9c9c;border-radius:9px;background:#cbcbcb"></div>
<div class="a" style="left:1122px;top:601px;width:56px;height:32px;border-radius:16px;background:#2d68c4"><div class="a" style="left:28px;top:4px;width:24px;height:24px;border-radius:50%;background:#cdcdcd"></div></div>
<svg class="a" style="left:1196px;top:603px;" width="24" height="28" viewBox="0 0 24 28" fill="none"><path d="M7.4 5.4 L16.4 14 L7.4 22.6" stroke="#262626" stroke-width="3.4" stroke-linecap="round" stroke-linejoin="round"/></svg>
<svg class="a" style="left:1237px;top:603px;" width="34" height="28" viewBox="0 0 34 28" fill="none"><path d="M5.2 23.2 V5.6 H12.4 L15 8.8 H29 V23.2 Z" stroke="#262626" stroke-width="2.9" stroke-linejoin="round"/><path d="M5.2 5.6 H12.4 L15 8.8 H5.2 Z" fill="#262626" stroke="#262626" stroke-width="1.6" stroke-linejoin="round"/></svg>
<div class="t" style="left:1286.5px;top:597.32px;line-height:40px;font-size:28px;color:#2b2b2b;font-weight:400;letter-spacing:0.893px;">Summer Sale 2024 - Conversions #1</div>
<div class="a" style="left:1950px;top:607px;width:20px;height:20px;border-radius:50%;background:#4a9468"></div>
<div class="t" style="left:1986px;top:597.32px;line-height:40px;font-size:28px;color:#2b2b2b;font-weight:400;letter-spacing:1.550px;">Active</div>
<div class="t" style="left:2309.6px;top:597.32px;line-height:40px;font-size:28px;color:#2b2b2b;font-weight:400;letter-spacing:-0.303px;">153,791</div>
<div class="t" style="left:2656.2px;top:597.32px;line-height:40px;font-size:28px;color:#2b2b2b;font-weight:400;letter-spacing:0.730px;">439,168</div>
<div class="t" style="left:3059.6px;top:597.32px;line-height:40px;font-size:28px;color:#2b2b2b;font-weight:400;letter-spacing:-0.243px;">1,594.18</div>
<div class="t" style="left:3169.2999999999997px;top:599.45px;line-height:40px;font-size:22px;color:#2b2b2b;font-weight:400;letter-spacing:1.523px;">USD</div>
<div class="a" style="left:1022px;top:679px;width:40px;height:40px;border:2px solid #9c9c9c;border-radius:9px;background:#cbcbcb"></div>
<div class="a" style="left:1122px;top:683px;width:56px;height:32px;border-radius:16px;background:#2d68c4"><div class="a" style="left:28px;top:4px;width:24px;height:24px;border-radius:50%;background:#cdcdcd"></div></div>
<svg class="a" style="left:1196px;top:685px;" width="24" height="28" viewBox="0 0 24 28" fill="none"><path d="M7.4 5.4 L16.4 14 L7.4 22.6" stroke="#262626" stroke-width="3.4" stroke-linecap="round" stroke-linejoin="round"/></svg>
<svg class="a" style="left:1237px;top:685px;" width="34" height="28" viewBox="0 0 34 28" fill="none"><path d="M5.2 23.2 V5.6 H12.4 L15 8.8 H29 V23.2 Z" stroke="#262626" stroke-width="2.9" stroke-linejoin="round"/><path d="M5.2 5.6 H12.4 L15 8.8 H5.2 Z" fill="#262626" stroke="#262626" stroke-width="1.6" stroke-linejoin="round"/></svg>
<div class="t" style="left:1286.5px;top:679.32px;line-height:40px;font-size:28px;color:#2b2b2b;font-weight:400;letter-spacing:1.035px;">Brand Awareness - Q4 #2</div>
<div class="a" style="left:1950px;top:689px;width:20px;height:20px;border-radius:50%;background:#4a9468"></div>
<div class="t" style="left:1986px;top:679.32px;line-height:40px;font-size:28px;color:#2b2b2b;font-weight:400;letter-spacing:1.550px;">Active</div>
<div class="t" style="left:2309.6px;top:679.32px;line-height:40px;font-size:28px;color:#2b2b2b;font-weight:400;letter-spacing:2.180px;">6,849</div>
<div class="t" style="left:2656.2px;top:679.32px;line-height:40px;font-size:28px;color:#2b2b2b;font-weight:400;letter-spacing:0.030px;">161,696</div>
<div class="t" style="left:3059.6px;top:679.32px;line-height:40px;font-size:28px;color:#2b2b2b;font-weight:400;letter-spacing:-1.475px;">1,041.11</div>
<div class="t" style="left:3158.6px;top:681.45px;line-height:40px;font-size:22px;color:#2b2b2b;font-weight:400;letter-spacing:1.523px;">USD</div>
<div class="a" style="left:1022px;top:761px;width:40px;height:40px;border:2px solid #9c9c9c;border-radius:9px;background:#cbcbcb"></div>
<div class="a" style="left:1122px;top:765px;width:56px;height:32px;border-radius:16px;background:#6c6c6c"><div class="a" style="left:4px;top:4px;width:24px;height:24px;border-radius:50%;background:#cdcdcd"></div></div>
<svg class="a" style="left:1196px;top:767px;" width="24" height="28" viewBox="0 0 24 28" fill="none"><path d="M7.4 5.4 L16.4 14 L7.4 22.6" stroke="#262626" stroke-width="3.4" stroke-linecap="round" stroke-linejoin="round"/></svg>
<svg class="a" style="left:1237px;top:767px;" width="34" height="28" viewBox="0 0 34 28" fill="none"><path d="M5.2 23.2 V5.6 H12.4 L15 8.8 H29 V23.2 Z" stroke="#262626" stroke-width="2.9" stroke-linejoin="round"/><path d="M5.2 5.6 H12.4 L15 8.8 H5.2 Z" fill="#262626" stroke="#262626" stroke-width="1.6" stroke-linejoin="round"/></svg>
<div class="t" style="left:1286.5px;top:761.32px;line-height:40px;font-size:28px;color:#2b2b2b;font-weight:400;letter-spacing:1.077px;">Retargeting - Cart Abandoners #3</div>
<div class="a" style="left:1950px;top:771px;width:20px;height:20px;border-radius:50%;background:#8a8a8a"></div>
<div class="t" style="left:1986px;top:761.32px;line-height:40px;font-size:28px;color:#2b2b2b;font-weight:400;letter-spacing:0.806px;">Paused</div>
<div class="t" style="left:2309.6px;top:761.32px;line-height:40px;font-size:28px;color:#2b2b2b;font-weight:400;letter-spacing:0.612px;">15,232</div>
<div class="t" style="left:2656.2px;top:761.32px;line-height:40px;font-size:28px;color:#2b2b2b;font-weight:400;letter-spacing:0.432px;">86,417</div>
<div class="t" style="left:3059.6px;top:761.32px;line-height:40px;font-size:28px;color:#2b2b2b;font-weight:400;letter-spacing:0.843px;">1,428.27</div>
<div class="t" style="left:3176.8999999999996px;top:763.45px;line-height:40px;font-size:22px;color:#2b2b2b;font-weight:400;letter-spacing:1.523px;">USD</div>
<div class="a" style="left:1022px;top:843px;width:40px;height:40px;border:2px solid #9c9c9c;border-radius:9px;background:#cbcbcb"></div>
<div class="a" style="left:1122px;top:847px;width:56px;height:32px;border-radius:16px;background:#6c6c6c"><div class="a" style="left:4px;top:4px;width:24px;height:24px;border-radius:50%;background:#cdcdcd"></div></div>
<svg class="a" style="left:1196px;top:849px;" width="24" height="28" viewBox="0 0 24 28" fill="none"><path d="M7.4 5.4 L16.4 14 L7.4 22.6" stroke="#262626" stroke-width="3.4" stroke-linecap="round" stroke-linejoin="round"/></svg>
<svg class="a" style="left:1237px;top:849px;" width="34" height="28" viewBox="0 0 34 28" fill="none"><path d="M5.2 23.2 V5.6 H12.4 L15 8.8 H29 V23.2 Z" stroke="#262626" stroke-width="2.9" stroke-linejoin="round"/><path d="M5.2 5.6 H12.4 L15 8.8 H5.2 Z" fill="#262626" stroke="#262626" stroke-width="1.6" stroke-linejoin="round"/></svg>
<div class="t" style="left:1286.5px;top:843.32px;line-height:40px;font-size:28px;color:#2b2b2b;font-weight:400;letter-spacing:1.164px;">Lookalike Audience - Top Customers #4</div>
<div class="a" style="left:1950px;top:853px;width:20px;height:20px;border-radius:50%;background:#8a8a8a"></div>
<div class="t" style="left:1986px;top:843.32px;line-height:40px;font-size:28px;color:#2b2b2b;font-weight:400;letter-spacing:0.806px;">Paused</div>
<div class="t" style="left:2309.6px;top:843.32px;line-height:40px;font-size:28px;color:#2b2b2b;font-weight:400;letter-spacing:0.892px;">47,723</div>
<div class="t" style="left:2656.2px;top:843.32px;line-height:40px;font-size:28px;color:#2b2b2b;font-weight:400;letter-spacing:1.064px;">146,609</div>
<div class="t" style="left:3059.6px;top:843.32px;line-height:40px;font-size:28px;color:#2b2b2b;font-weight:400;letter-spacing:-0.486px;">1,135.53</div>
<div class="t" style="left:3167.6px;top:845.45px;line-height:40px;font-size:22px;color:#2b2b2b;font-weight:400;letter-spacing:1.523px;">USD</div>
<div class="a" style="left:1022px;top:925px;width:40px;height:40px;border:2px solid #9c9c9c;border-radius:9px;background:#cbcbcb"></div>
<div class="a" style="left:1122px;top:929px;width:56px;height:32px;border-radius:16px;background:#2d68c4"><div class="a" style="left:28px;top:4px;width:24px;height:24px;border-radius:50%;background:#cdcdcd"></div></div>
<svg class="a" style="left:1196px;top:931px;" width="24" height="28" viewBox="0 0 24 28" fill="none"><path d="M7.4 5.4 L16.4 14 L7.4 22.6" stroke="#262626" stroke-width="3.4" stroke-linecap="round" stroke-linejoin="round"/></svg>
<svg class="a" style="left:1237px;top:931px;" width="34" height="28" viewBox="0 0 34 28" fill="none"><path d="M5.2 23.2 V5.6 H12.4 L15 8.8 H29 V23.2 Z" stroke="#262626" stroke-width="2.9" stroke-linejoin="round"/><path d="M5.2 5.6 H12.4 L15 8.8 H5.2 Z" fill="#262626" stroke="#262626" stroke-width="1.6" stroke-linejoin="round"/></svg>
<div class="t" style="left:1286.5px;top:925.32px;line-height:40px;font-size:28px;color:#2b2b2b;font-weight:400;letter-spacing:1.101px;">Holiday Promo - Traffic #5</div>
<div class="a" style="left:1950px;top:935px;width:20px;height:20px;border-radius:50%;background:#4a9468"></div>
<div class="t" style="left:1986px;top:925.32px;line-height:40px;font-size:28px;color:#2b2b2b;font-weight:400;letter-spacing:1.550px;">Active</div>
<div class="t" style="left:2309.6px;top:925.32px;line-height:40px;font-size:28px;color:#2b2b2b;font-weight:400;letter-spacing:1.332px;">74,085</div>
<div class="t" style="left:2656.2px;top:925.32px;line-height:40px;font-size:28px;color:#2b2b2b;font-weight:400;letter-spacing:1.530px;">225,692</div>
<div class="t" style="left:3059.6px;top:925.32px;line-height:40px;font-size:28px;color:#2b2b2b;font-weight:400;letter-spacing:1.043px;">3,237.03</div>
<div class="t" style="left:3178.2999999999997px;top:927.45px;line-height:40px;font-size:22px;color:#2b2b2b;font-weight:400;letter-spacing:1.523px;">USD</div>
<div class="a" style="left:1022px;top:1007px;width:40px;height:40px;border:2px solid #9c9c9c;border-radius:9px;background:#cbcbcb"></div>
<div class="a" style="left:1122px;top:1011px;width:56px;height:32px;border-radius:16px;background:#6c6c6c"><div class="a" style="left:4px;top:4px;width:24px;height:24px;border-radius:50%;background:#cdcdcd"></div></div>
<svg class="a" style="left:1196px;top:1013px;" width="24" height="28" viewBox="0 0 24 28" fill="none"><path d="M7.4 5.4 L16.4 14 L7.4 22.6" stroke="#262626" stroke-width="3.4" stroke-linecap="round" stroke-linejoin="round"/></svg>
<svg class="a" style="left:1237px;top:1013px;" width="34" height="28" viewBox="0 0 34 28" fill="none"><path d="M5.2 23.2 V5.6 H12.4 L15 8.8 H29 V23.2 Z" stroke="#262626" stroke-width="2.9" stroke-linejoin="round"/><path d="M5.2 5.6 H12.4 L15 8.8 H5.2 Z" fill="#262626" stroke="#262626" stroke-width="1.6" stroke-linejoin="round"/></svg>
<div class="t" style="left:1286.5px;top:1007.32px;line-height:40px;font-size:28px;color:#2b2b2b;font-weight:400;letter-spacing:1.026px;">New Product Launch - Engagement #6</div>
<div class="a" style="left:1950px;top:1017px;width:20px;height:20px;border-radius:50%;background:#8a8a8a"></div>
<div class="t" style="left:1986px;top:1007.32px;line-height:40px;font-size:28px;color:#2b2b2b;font-weight:400;letter-spacing:0.806px;">Paused</div>
<div class="t" style="left:2309.6px;top:1007.32px;line-height:40px;font-size:28px;color:#2b2b2b;font-weight:400;letter-spacing:0.892px;">57,058</div>
<div class="t" style="left:2656.2px;top:1007.32px;line-height:40px;font-size:28px;color:#2b2b2b;font-weight:400;letter-spacing:1.097px;">140,504</div>
<div class="t" style="left:3059.6px;top:1007.32px;line-height:40px;font-size:28px;color:#2b2b2b;font-weight:400;letter-spacing:0.612px;">632.14</div>
<div class="t" style="left:3150.7px;top:1009.45px;line-height:40px;font-size:22px;color:#2b2b2b;font-weight:400;letter-spacing:1.523px;">USD</div>
<div class="a" style="left:1022px;top:1089px;width:40px;height:40px;border:2px solid #9c9c9c;border-radius:9px;background:#cbcbcb"></div>
<div class="a" style="left:1122px;top:1093px;width:56px;height:32px;border-radius:16px;background:#2d68c4"><div class="a" style="left:28px;top:4px;width:24px;height:24px;border-radius:50%;background:#cdcdcd"></div></div>
<svg class="a" style="left:1196px;top:1095px;" width="24" height="28" viewBox="0 0 24 28" fill="none"><path d="M7.4 5.4 L16.4 14 L7.4 22.6" stroke="#262626" stroke-width="3.4" stroke-linecap="round" stroke-linejoin="round"/></svg>
<svg class="a" style="left:1237px;top:1095px;" width="34" height="28" viewBox="0 0 34 28" fill="none"><path d="M5.2 23.2 V5.6 H12.4 L15 8.8 H29 V23.2 Z" stroke="#262626" stroke-width="2.9" stroke-linejoin="round"/><path d="M5.2 5.6 H12.4 L15 8.8 H5.2 Z" fill="#262626" stroke="#262626" stroke-width="1.6" stroke-linejoin="round"/></svg>
<div class="t" style="left:1286.5px;top:1089.32px;line-height:40px;font-size:28px;color:#2b2b2b;font-weight:400;letter-spacing:0.967px;">Lead Generation - Newsletter #7</div>
<div class="a" style="left:1950px;top:1099px;width:20px;height:20px;border-radius:50%;background:#4a9468"></div>
<div class="t" style="left:1986px;top:1089.32px;line-height:40px;font-size:28px;color:#2b2b2b;font-weight:400;letter-spacing:1.550px;">Active</div>
<div class="t" style="left:2309.6px;top:1089.32px;line-height:40px;font-size:28px;color:#2b2b2b;font-weight:400;letter-spacing:2.012px;">82,620</div>
<div class="t" style="left:2656.2px;top:1089.32px;line-height:40px;font-size:28px;color:#2b2b2b;font-weight:400;letter-spacing:0.772px;">21,845</div>
<div class="t" style="left:3059.6px;top:1089.32px;line-height:40px;font-size:28px;color:#2b2b2b;font-weight:400;letter-spacing:0.492px;">815.32</div>
<div class="t" style="left:3150.1px;top:1091.45px;line-height:40px;font-size:22px;color:#2b2b2b;font-weight:400;letter-spacing:1.523px;">USD</div>
<div class="a" style="left:1022px;top:1171px;width:40px;height:40px;border:2px solid #9c9c9c;border-radius:9px;background:#cbcbcb"></div>
<div class="a" style="left:1122px;top:1175px;width:56px;height:32px;border-radius:16px;background:#2d68c4"><div class="a" style="left:28px;top:4px;width:24px;height:24px;border-radius:50%;background:#cdcdcd"></div></div>
<svg class="a" style="left:1196px;top:1177px;" width="24" height="28" viewBox="0 0 24 28" fill="none"><path d="M7.4 5.4 L16.4 14 L7.4 22.6" stroke="#262626" stroke-width="3.4" stroke-linecap="round" stroke-linejoin="round"/></svg>
<svg class="a" style="left:1237px;top:1177px;" width="34" height="28" viewBox="0 0 34 28" fill="none"><path d="M5.2 23.2 V5.6 H12.4 L15 8.8 H29 V23.2 Z" stroke="#262626" stroke-width="2.9" stroke-linejoin="round"/><path d="M5.2 5.6 H12.4 L15 8.8 H5.2 Z" fill="#262626" stroke="#262626" stroke-width="1.6" stroke-linejoin="round"/></svg>
<div class="t" style="left:1286.5px;top:1171.32px;line-height:40px;font-size:28px;color:#2b2b2b;font-weight:400;letter-spacing:0.956px;">App Install Campaign #8</div>
<div class="a" style="left:1950px;top:1181px;width:20px;height:20px;border-radius:50%;background:#4a9468"></div>
<div class="t" style="left:1986px;top:1171.32px;line-height:40px;font-size:28px;color:#2b2b2b;font-weight:400;letter-spacing:1.550px;">Active</div>
<div class="t" style="left:2309.6px;top:1171.32px;line-height:40px;font-size:28px;color:#2b2b2b;font-weight:400;letter-spacing:0.964px;">183,399</div>
<div class="t" style="left:2656.2px;top:1171.32px;line-height:40px;font-size:28px;color:#2b2b2b;font-weight:400;letter-spacing:-0.070px;">104,815</div>
<div class="t" style="left:3059.6px;top:1171.32px;line-height:40px;font-size:28px;color:#2b2b2b;font-weight:400;letter-spacing:1.771px;">4,934.33</div>
<div class="t" style="left:3183.3999999999996px;top:1173.45px;line-height:40px;font-size:22px;color:#2b2b2b;font-weight:400;letter-spacing:1.523px;">USD</div>
<div class="a" style="left:1022px;top:1253px;width:40px;height:40px;border:2px solid #9c9c9c;border-radius:9px;background:#cbcbcb"></div>
<div class="a" style="left:1122px;top:1257px;width:56px;height:32px;border-radius:16px;background:#2d68c4"><div class="a" style="left:28px;top:4px;width:24px;height:24px;border-radius:50%;background:#cdcdcd"></div></div>
<svg class="a" style="left:1196px;top:1259px;" width="24" height="28" viewBox="0 0 24 28" fill="none"><path d="M7.4 5.4 L16.4 14 L7.4 22.6" stroke="#262626" stroke-width="3.4" stroke-linecap="round" stroke-linejoin="round"/></svg>
<svg class="a" style="left:1237px;top:1259px;" width="34" height="28" viewBox="0 0 34 28" fill="none"><path d="M5.2 23.2 V5.6 H12.4 L15 8.8 H29 V23.2 Z" stroke="#262626" stroke-width="2.9" stroke-linejoin="round"/><path d="M5.2 5.6 H12.4 L15 8.8 H5.2 Z" fill="#262626" stroke="#262626" stroke-width="1.6" stroke-linejoin="round"/></svg>
<div class="t" style="left:1286.5px;top:1253.32px;line-height:40px;font-size:28px;color:#2b2b2b;font-weight:400;letter-spacing:1.069px;">Video Views - Brand Story #9</div>
<div class="a" style="left:1950px;top:1263px;width:20px;height:20px;border-radius:50%;background:#4a9468"></div>
<div class="t" style="left:1986px;top:1253.32px;line-height:40px;font-size:28px;color:#2b2b2b;font-weight:400;letter-spacing:1.550px;">Active</div>
<div class="t" style="left:2309.6px;top:1253.32px;line-height:40px;font-size:28px;color:#2b2b2b;font-weight:400;letter-spacing:-0.920px;">167,146</div>
<div class="t" style="left:2656.2px;top:1253.32px;line-height:40px;font-size:28px;color:#2b2b2b;font-weight:400;letter-spacing:1.664px;">265,992</div>
<div class="t" style="left:3059.6px;top:1253.32px;line-height:40px;font-size:28px;color:#2b2b2b;font-weight:400;letter-spacing:-1.457px;">1,716.18</div>
<div class="t" style="left:3160.7999999999997px;top:1255.45px;line-height:40px;font-size:22px;color:#2b2b2b;font-weight:400;letter-spacing:1.523px;">USD</div>
<div class="a" style="left:1022px;top:1335px;width:40px;height:40px;border:2px solid #9c9c9c;border-radius:9px;background:#cbcbcb"></div>
<div class="a" style="left:1122px;top:1339px;width:56px;height:32px;border-radius:16px;background:#2d68c4"><div class="a" style="left:28px;top:4px;width:24px;height:24px;border-radius:50%;background:#cdcdcd"></div></div>
<svg class="a" style="left:1196px;top:1341px;" width="24" height="28" viewBox="0 0 24 28" fill="none"><path d="M7.4 5.4 L16.4 14 L7.4 22.6" stroke="#262626" stroke-width="3.4" stroke-linecap="round" stroke-linejoin="round"/></svg>
<svg class="a" style="left:1237px;top:1341px;" width="34" height="28" viewBox="0 0 34 28" fill="none"><path d="M5.2 23.2 V5.6 H12.4 L15 8.8 H29 V23.2 Z" stroke="#262626" stroke-width="2.9" stroke-linejoin="round"/><path d="M5.2 5.6 H12.4 L15 8.8 H5.2 Z" fill="#262626" stroke="#262626" stroke-width="1.6" stroke-linejoin="round"/></svg>
<div class="t" style="left:1286.5px;top:1335.32px;line-height:40px;font-size:28px;color:#2b2b2b;font-weight:400;letter-spacing:0.800px;">Catalog Sales - Dynamic Ads #10</div>
<div class="a" style="left:1950px;top:1345px;width:20px;height:20px;border-radius:50%;background:#4a9468"></div>
<div class="t" style="left:1986px;top:1335.32px;line-height:40px;font-size:28px;color:#2b2b2b;font-weight:400;letter-spacing:1.550px;">Active</div>
<div class="t" style="left:2309.6px;top:1335.32px;line-height:40px;font-size:28px;color:#2b2b2b;font-weight:400;letter-spacing:0.892px;">27,582</div>
<div class="t" style="left:2656.2px;top:1335.32px;line-height:40px;font-size:28px;color:#2b2b2b;font-weight:400;letter-spacing:1.997px;">303,686</div>
<div class="t" style="left:3059.6px;top:1335.32px;line-height:40px;font-size:28px;color:#2b2b2b;font-weight:400;letter-spacing:0.957px;">3,941.60</div>
<div class="t" style="left:3177.7px;top:1337.45px;line-height:40px;font-size:22px;color:#2b2b2b;font-weight:400;letter-spacing:1.523px;">USD</div>
</body></html>
